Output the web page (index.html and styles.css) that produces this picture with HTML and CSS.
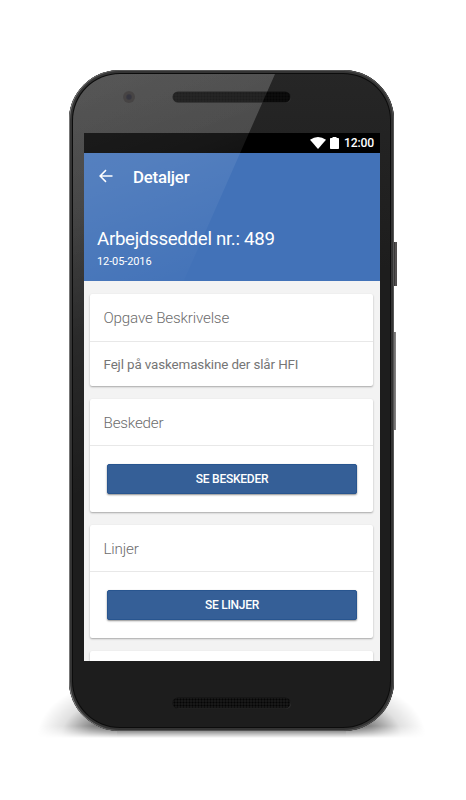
FILE: index.html
```html
<!DOCTYPE html>
<html lang="da">
<head>
<meta charset="utf-8">
<title>Detaljer</title>
<link rel="stylesheet" href="styles.css">
</head>
<body>
<div class="phone">
  <div class="ground"></div>
  <div class="key power"></div>
  <div class="key volume"></div>
  <div class="body">
    <div class="sheen"></div>
    <div class="bezel top">
      <span class="camera"></span>
      <span class="speaker"></span>
    </div>
    <main class="screen">
      <div class="status">
        <svg class="wifi" width="16" height="12" viewBox="0 0 16 12"><path d="M0 2.8Q8-2.6 16 2.8L8 12Z" fill="#fff"/></svg>
        <svg class="battery" width="9" height="12" viewBox="0 0 9 12"><path d="M.8 1H2.5V0h4v1h1.7q.8 0 .8.8V11.2q0 .8-.8.8H.8q-.8 0-.8-.8V1.800q0-.8.8-.8Z" fill="#fff"/></svg>
        <span class="clock">12:00</span>
      </div>
      <header class="header">
        <div class="toolbar">
          <svg class="back" width="14" height="14" viewBox="0 0 14 14"><path d="M13.500 7H1.200M7 1.100L1.100 7L7 12.900" fill="none" stroke="#fff" stroke-width="1.500"/></svg>
          <h1 class="title">Detaljer</h1>
        </div>
        <h2 class="order">Arbejdsseddel nr.: 489</h2>
        <p class="date">12-05-2016</p>
      </header>
      <div class="cards">
        <section class="card">
          <h3 class="card-title">Opgave Beskrivelse</h3>
          <p class="text">Fejl på vaskemaskine der slår HFI</p>
        </section>
        <section class="card action">
          <h3 class="card-title">Beskeder</h3>
          <button class="button">SE BESKEDER</button>
        </section>
        <section class="card action">
          <h3 class="card-title">Linjer</h3>
          <button class="button">SE LINJER</button>
        </section>
        <section class="card action"></section>
      </div>
    </main>
    <div class="bezel bottom"><span class="speaker"></span></div>
    <div class="glare"></div>
  </div>
</div>
</body>
</html>
```
FILE: styles.css
```css
* { box-sizing: border-box; }
body {
  margin: 0;
  width: 466px;
  height: 800px;
  overflow: hidden;
  background: #fff;
  font-family: Roboto, sans-serif;
}
h1, h2, h3, p { margin: 0; }
.phone {
  position: relative;
  width: 325px;
  height: 661px;
  margin: 70px 0 0 69px;
}
.ground {
  position: absolute;
  left: -32px;
  right: -32px;
  bottom: -7px;
  height: 60px;
  background:
    radial-gradient(ellipse 80px 56px at 80px 100%, rgba(0,0,0,.75), rgba(0,0,0,.5) 35%, rgba(0,0,0,.12) 70%, transparent) 0 0 / 80px 100% no-repeat,
    radial-gradient(ellipse 80px 56px at 0 100%, rgba(0,0,0,.75), rgba(0,0,0,.5) 35%, rgba(0,0,0,.12) 70%, transparent) 100% 0 / 80px 100% no-repeat,
    linear-gradient(rgba(0,0,0,.75), rgba(0,0,0,.75)) 50% 0 / calc(100% - 160px) 100% no-repeat;
  -webkit-mask-image: linear-gradient(#000 48px, transparent 60px);
  mask-image: linear-gradient(#000 48px, transparent 60px);
}
.key { position: absolute; width: 6px; background: linear-gradient(90deg, #2c2a2a 3px, #625f5f 5px, #3c3939); }
.power { left: 322px; top: 172px; height: 44px; }
.volume { left: 321px; top: 262px; height: 98px; background: linear-gradient(90deg, #2c2a2a 3px, #8c8a8a 5px, #777); }
.body {
  position: relative;
  height: 661px;
  padding: 3px 14px 3px 15px;
  border-radius: 51px / 50px;
  overflow: hidden;
  background: linear-gradient(#262626, #1d1d1d 200px);
  box-shadow: inset 1px 0 0 #777, inset 0 0 0 1px #555, inset 0 0 0 3px #343434, inset 0 0 0 4px #0c0c0c;
}
.bezel { display: flex; justify-content: center; position: relative; }
.top { height: 60px; padding: 19px 2px 0 0; }
.bottom { padding: 37px 2px 0 0; }
.speaker {
  width: 117px;
  height: 10px;
  border-radius: 5px;
  background: radial-gradient(circle, #050505 .8px, transparent 1.2px) 0 0 / 3px 3px, #181818;
  box-shadow: 0 0 0 .5px #111, 1px 1px 0 #303030;
}
.top .speaker { background-color: #0c0c0c; }
.camera {
  position: absolute;
  left: 39px;
  top: 18px;
  width: 12px;
  height: 12px;
  border-radius: 50%;
  background: radial-gradient(circle, #1d1d28 0 2px, #302d2d 3.500px 5px, #2e2e2e);
}
.screen {
  position: relative;
  width: 296px;
  height: 528px;
  overflow: hidden;
  background: #f3f3f3;
}
.status {
  display: flex;
  align-items: center;
  justify-content: flex-end;
  height: 20px;
  padding-right: 6px;
  background: #000;
  color: #fff;
}
.battery { margin: 0 5px 0 4px; }
.clock { width: 30px; font-size: 12.200px; font-weight: 500; letter-spacing: -.2px; line-height: 21px; white-space: nowrap; }
.header { height: 128px; padding: 0 13px; background: #4272b8; color: #fff; }
.toolbar { display: flex; align-items: center; height: 48px; padding-left: 2px; }
.back { margin-right: 20px; position: relative; top: -1px; }
.title { font-size: 16.800px; font-weight: 500; letter-spacing: -.2px; line-height: 20px; }
.order { margin-top: 26px; font-size: 18.700px; font-weight: 400; letter-spacing: -.31px; line-height: 24px; white-space: nowrap; }
.date { margin-top: 2px; font-size: 11px; letter-spacing: -.1px; line-height: 17px; }
.cards { display: flex; flex-direction: column; gap: 13px; padding: 13px 7px 13px 6px; }
.card {
  flex: none;
  height: 91.500px;
  border-radius: 2px;
  background: #fff;
  box-shadow: 0 1px 2px rgba(0,0,0,.32);
}
.action { height: 113.300px; }
.card-title {
  height: 47.500px;
  padding-left: 13.500px;
  border-bottom: 1px solid #e8e8e8;
  color: #6c6c6c;
  font-size: 15.200px;
  font-weight: 300;
  letter-spacing: -.18px;
  line-height: 48px;
}
.text { padding-left: 13.500px; color: #757575; font-size: 13.400px; letter-spacing: -.12px; line-height: 45px; white-space: nowrap; }
.button {
  display: block;
  width: 250px;
  height: 30px;
  margin: 18px auto 0 17px;
  padding: 0;
  border: 1px solid #28558f;
  border-radius: 2px;
  background: #355f97;
  box-shadow: 0 1px 2px rgba(0,0,0,.45);
  color: #fff;
  font: 500 12px/29px Roboto, sans-serif;
  letter-spacing: -.25px;
}
.sheen, .glare {
  position: absolute;
  inset: 4px;
  border-radius: 47px;
  clip-path: polygon(0 0, 202px 0, 52px 340px, 0 460px);
  pointer-events: none;
}
.sheen { background: linear-gradient(160deg, rgba(255,255,255,.12), rgba(255,255,255,.1) 130px, rgba(255,255,255,0) 400px); }
.glare { background: linear-gradient(160deg, rgba(255,255,255,.12), rgba(255,255,255,.09) 110px, rgba(255,255,255,0) 250px); }
```
